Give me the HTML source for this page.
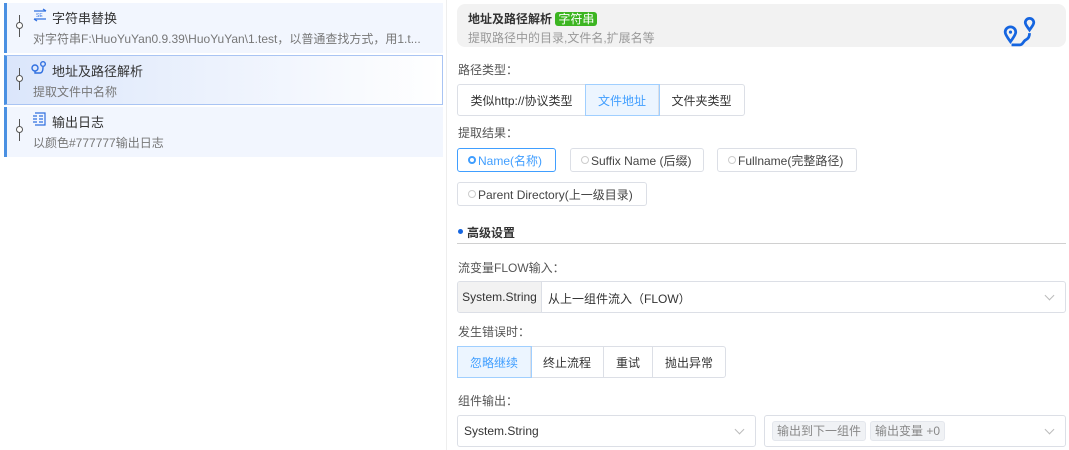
<!DOCTYPE html><html><head><meta charset="utf-8"><style>
*{box-sizing:border-box;margin:0;padding:0}
body{width:1069px;height:450px;background:#fff;font-family:"Liberation Sans","Noto Sans CJK SC",sans-serif;font-size:12px;color:#333;position:relative;overflow:hidden}
.a{position:absolute;white-space:nowrap}
.item{position:absolute;left:4px;width:439px;height:50px;background:#f2f6fe;border-left:3px solid #4a90e2}
.item .t{position:absolute;left:45px;top:5px;font-size:13px;color:#333}
.item .d{position:absolute;left:26px;top:27px;color:#777;font-size:12px;white-space:nowrap}
.item .pin{position:absolute;left:12px;top:12px;width:1px;height:22px;background:#555}
.item .pin:after{content:"";position:absolute;left:-3px;top:7px;width:5px;height:5px;border:1px solid #555;border-radius:50%;background:#fff}
.lbl{position:absolute;left:458px;color:#555;font-size:12px}
.seg{position:absolute;display:flex;border:1px solid #dcdfe6;border-radius:3px;background:#fff}
.seg div{border-right:1px solid #dcdfe6;display:flex;align-items:center;justify-content:center;color:#333;white-space:nowrap;font-size:12px}
.seg div:last-child{border-right:none}
.seg .on{background:#ecf5ff;color:#409eff;outline:1px solid #a0cfff}
.rad{position:absolute;height:24px;border:1px solid #dcdfe6;border-radius:3px;display:flex;align-items:center;padding-left:10px;color:#444;white-space:nowrap}
.rad i{display:inline-block;width:8px;height:8px;border:1px solid #ccc;border-radius:50%;margin-right:2px}
.rad.on{border-color:#409eff;color:#409eff}
.rad.on i{border:2px solid #409eff;background:#fff}
.box{position:absolute;border:1px solid #dcdfe6;border-radius:3px;background:#fff}
.chev{position:absolute;right:12px;top:10px;width:7px;height:7px;border-right:1px solid #bbb;border-bottom:1px solid #bbb;transform:rotate(45deg)}
.tag{display:inline-block;background:#f0f2f5;border:1px solid #e4e7ed;color:#888;border-radius:3px;padding:0 4px;height:20px;line-height:18px;margin-right:4px}
</style></head><body>
<div class="item" style="top:3px"><div class="pin"></div>
<svg class="a" style="left:25px;top:5px" width="16" height="14" viewBox="0 0 16 14"><path d="M2 3h12M11 1l3 2M14 11H2M5 13l-3-2" stroke="#2f6fe0" fill="none" stroke-width="1.3"/><text x="4" y="9" font-size="5" fill="#2f6fe0">SE</text></svg>
<div class="t">字符串替换</div><div class="d">对字符串F:\HuoYuYan0.9.39\HuoYuYan\1.test，以普通查找方式，用1.t...</div></div>
<div class="item" style="top:55px;background:linear-gradient(90deg,#dbe6fb,#fff);border:1px solid #a9c4f3;border-left:3px solid #4a90e2"><div class="pin"></div>
<svg class="a" style="left:24px;top:4px" width="16" height="16" viewBox="0 0 16 16"><circle cx="4" cy="8" r="3" stroke="#2f6fe0" fill="none" stroke-width="1.4"/><circle cx="12" cy="4" r="2.3" stroke="#2f6fe0" fill="none" stroke-width="1.4"/><path d="M4 11v2h5c3 0 3-4 3-6" stroke="#2f6fe0" fill="none" stroke-width="1.4"/></svg>
<div class="t">地址及路径解析</div><div class="d">提取文件中名称</div></div>
<div class="item" style="top:107px"><div class="pin"></div>
<svg class="a" style="left:25px;top:5px" width="16" height="14" viewBox="0 0 16 14"><path d="M3 1h10v12H3M1 4h4M1 7h4M1 10h4M7 4h4M7 7h4M7 10h4" stroke="#2f6fe0" fill="none" stroke-width="1.2"/></svg>
<div class="t">输出日志</div><div class="d">以颜色#777777输出日志</div></div>
<div class="a" style="left:446px;top:0;width:1px;height:450px;background:#eee"></div>

<div class="a" style="left:457px;top:4px;width:609px;height:43px;background:#f2f2f2;border-radius:8px">
<div class="a" style="left:11px;top:6px;font-weight:bold;font-size:12px;color:#333">地址及路径解析 <span style="background:#3cb521;color:#fff;font-weight:normal;border-radius:3px;padding:0 3px;font-size:12px">字符串</span></div>
<div class="a" style="left:11px;top:25px;color:#999">提取路径中的目录,文件名,扩展名等</div>
<svg class="a" style="left:546px;top:8px" width="34" height="36" viewBox="0 0 32 34"><path d="M7 28c-3-4-5-7-5-9a5 5 0 0 1 10 0c0 2-2 5-5 9z" stroke="#1565e0" fill="none" stroke-width="2.6"/><circle cx="7" cy="19" r="1.5" fill="#1565e0"/><path d="M25 17c-2-3-4-5-4-7a4 4 0 0 1 8 0c0 2-2 4-4 7z" stroke="#1565e0" fill="none" stroke-width="2.6"/><path d="M8 31h8c3 0 3-4 6-5 2-1 3-3 3-6" stroke="#1565e0" fill="none" stroke-width="2.6"/></svg>
</div>

<div class="lbl" style="top:61px">路径类型：</div>
<div class="seg" style="left:457px;top:84px;height:32px"><div style="width:128px">类似http://协议类型</div><div class="on" style="width:73px">文件地址</div><div style="width:85px">文件夹类型</div></div>
<div class="lbl" style="top:124px">提取结果：</div>
<div class="rad on" style="left:457px;top:148px;width:99px"><i></i>Name(名称)</div>
<div class="rad" style="left:570px;top:148px;width:134px"><i></i>Suffix Name (后缀)</div>
<div class="rad" style="left:717px;top:148px;width:140px"><i></i>Fullname(完整路径)</div>
<div class="rad" style="left:457px;top:182px;width:190px"><i></i>Parent Directory(上一级目录)</div>

<div class="a" style="left:458px;top:229px;width:5px;height:5px;border-radius:50%;background:#1565e0"></div>
<div class="a" style="left:467px;top:224px;font-weight:bold;color:#333">高级设置</div>
<div class="a" style="left:457px;top:243px;width:609px;height:1px;background:#d0d0d0"></div>

<div class="lbl" style="top:259px">流变量FLOW输入：</div>
<div class="box" style="left:457px;top:281px;width:609px;height:32px;overflow:hidden">
<div class="a" style="left:0;top:0;width:84px;height:30px;background:#f2f2f2;border-right:1px solid #dcdfe6;line-height:30px;text-align:center;color:#333">System.String</div>
<div class="a" style="left:90px;top:8px;color:#333">从上一组件流入（FLOW）</div><div class="chev"></div></div>

<div class="lbl" style="top:323px">发生错误时：</div>
<div class="seg" style="left:457px;top:346px;height:32px"><div class="on" style="width:73px">忽略继续</div><div style="width:73px">终止流程</div><div style="width:49px">重试</div><div style="width:72px">抛出异常</div></div>

<div class="lbl" style="top:392px">组件输出：</div>
<div class="box" style="left:457px;top:415px;width:299px;height:32px"><div class="a" style="left:6px;top:8px;color:#333">System.String</div><div class="chev"></div></div>
<div class="box" style="left:764px;top:415px;width:302px;height:32px"><div class="a" style="left:7px;top:5px;font-size:12px"><span class="tag">输出到下一组件</span><span class="tag">输出变量 +0</span></div><div class="chev"></div></div>
</body></html>
